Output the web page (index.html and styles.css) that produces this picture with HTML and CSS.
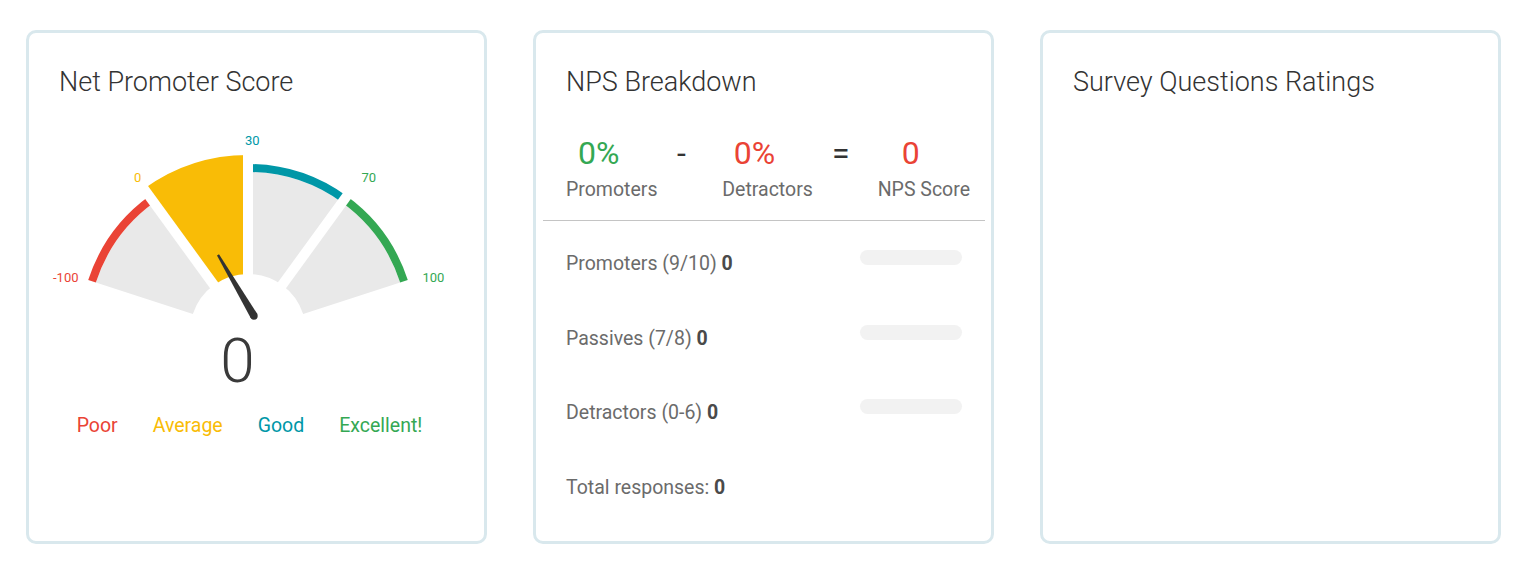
FILE: index.html
```html
<!DOCTYPE html>
<html>
<head>
<meta charset="utf-8">
<link rel="stylesheet" href="styles.css">
</head>
<body>
<div class="board">
  <section class="card">
    <h2 class="card-title">Net Promoter Score</h2>
    <svg class="gauge" width="455" height="195" viewBox="29 130 455 195">
      <path class="seg-bg" d="M 192.84 314.08 L 95.83 282.56 A 160 160 0 0 1 153.95 202.56 L 213.91 285.08 A 58 58 0 0 0 192.84 314.08 Z"/>
      <path class="c-red" d="M 95.83 282.56 L 88.22 280.08 A 168 168 0 0 1 149.25 196.09 L 153.95 202.56 A 160 160 0 0 0 95.83 282.56 Z"/>
      <path class="c-yellow" d="M 213.91 285.08 L 143.96 188.80 A 177 177 0 0 1 248 155 L 248 274 A 58 58 0 0 0 213.91 285.08 Z"/>
      <path class="seg-bg" d="M 248 274 L 248 172 A 160 160 0 0 1 342.05 202.56 L 282.09 285.08 A 58 58 0 0 0 248 274 Z"/>
      <path class="c-teal" d="M 248 172 L 248 164 A 168 168 0 0 1 346.75 196.09 L 342.05 202.56 A 160 160 0 0 0 248 172 Z"/>
      <path class="seg-bg" d="M 282.09 285.08 L 342.05 202.56 A 160 160 0 0 1 400.17 282.56 L 303.16 314.08 A 58 58 0 0 0 282.09 285.08 Z"/>
      <path class="c-green" d="M 342.05 202.56 L 346.75 196.09 A 168 168 0 0 1 407.78 280.08 L 400.17 282.56 A 160 160 0 0 0 342.05 202.56 Z"/>
      <line class="gap" x1="248" y1="332" x2="139.26" y2="182.33"/>
      <line class="gap" x1="248" y1="332" x2="248" y2="147"/>
      <line class="gap" x1="248" y1="332" x2="356.74" y2="182.33"/>
      <polygon class="needle" points="257.3,314.0 219.0,254.3 217.0,255.5 250.7,318.0"/>
      <circle class="needle" cx="254" cy="316" r="3.7"/>
      <text class="tick c-red" x="53" y="281.5">-100</text>
      <text class="tick c-yellow" x="134" y="181.5">0</text>
      <text class="tick c-teal" x="245" y="145">30</text>
      <text class="tick c-green" x="361.5" y="181.5">70</text>
      <text class="tick c-green" x="422.5" y="281.5">100</text>
    </svg>
    <div class="gauge-value">0</div>
    <div class="legend">
      <span class="t-red">Poor</span>
      <span class="t-yellow">Average</span>
      <span class="t-teal">Good</span>
      <span class="t-green">Excellent!</span>
    </div>
  </section>

  <section class="card card-nps">
    <h2 class="card-title">NPS Breakdown</h2>
    <div class="stats">
      <div class="stat">
        <div class="stat-num t-green">0%</div>
        <div class="stat-label">Promoters</div>
      </div>
      <div class="op op-minus">-</div>
      <div class="stat">
        <div class="stat-num t-red">0%</div>
        <div class="stat-label">Detractors</div>
      </div>
      <div class="op op-eq">=</div>
      <div class="stat">
        <div class="stat-num t-red">0</div>
        <div class="stat-label">NPS Score</div>
      </div>
    </div>
    <hr class="divider">
    <ul class="rows">
      <li class="row"><span class="row-label">Promoters (9/10) <b>0</b></span><span class="bar"></span></li>
      <li class="row"><span class="row-label">Passives (7/8) <b>0</b></span><span class="bar"></span></li>
      <li class="row"><span class="row-label">Detractors (0-6) <b>0</b></span><span class="bar"></span></li>
      <li class="row"><span class="row-label">Total responses: <b>0</b></span></li>
    </ul>
  </section>

  <section class="card">
    <h2 class="card-title">Survey Questions Ratings</h2>
  </section>
</div>
</body>
</html>
```

FILE: styles.css
```css
* { box-sizing: border-box; }

body {
  margin: 0;
  background: #ffffff;
  font-family: Roboto, "Liberation Sans", Arial, sans-serif;
  color: #333333;
}

.board {
  display: flex;
  gap: 46px;
  padding: 30px 0 0 26px;
}

.card {
  width: 461px;
  height: 514px;
  border: 3px solid #d9e8ed;
  border-radius: 10px;
  padding: 34px 30px 0 30px;
  background: #fff;
}

.card-title {
  margin: 0;
  font-size: 27px;
  line-height: 30px;
  font-weight: 300;
  color: #333;
}

/* gauge */
.gauge {
  display: block;
  margin: 33px 0 0 -30px;
}

.seg-bg { fill: #e9e9e9; }
.c-red { fill: #ea4335; }
.c-yellow { fill: #f9bc06; }
.c-teal { fill: #0097a7; }
.c-green { fill: #34a853; }
.gap { stroke: #ffffff; stroke-width: 10; }
.needle { fill: #333333; }
.tick {
  font-family: Roboto, "Liberation Sans", sans-serif;
  font-size: 13px;
}

.gauge-value {
  margin-top: 5px;
  font-size: 62px;
  line-height: 62px;
  font-weight: 300;
  color: #3a3a3a;
  text-align: center;
  padding-right: 38px;
}

.legend {
  margin-top: 23px;
  display: flex;
  justify-content: center;
  gap: 35px;
  padding-right: 14px;
  font-size: 19.5px;
  line-height: 22px;
}

.t-red { color: #ea4335; }
.t-yellow { color: #f9bc06; }
.t-teal { color: #0097a7; }
.t-green { color: #34a853; }

/* NPS breakdown */
.card-nps { padding-right: 29px; }

.stats {
  margin: 38px -8px 0 0;
  display: grid;
  grid-template-columns: auto 1fr auto 1fr auto;
}

.stat {
  display: flex;
  flex-direction: column;
  align-items: center;
}

.stat-num {
  font-size: 32px;
  line-height: 36px;
  padding-right: 26px;
}

.stat-label {
  margin-top: 8px;
  font-size: 19.5px;
  line-height: 22px;
  color: #6b6b6b;
}

.op {
  font-size: 32px;
  line-height: 36px;
  color: #333;
  text-align: center;
}
.op-minus { padding-right: 17px; }
.op-eq { padding-right: 9px; }

.divider {
  margin: 19px -23px 0 -23px;
  border: 0;
  border-top: 1px solid #c4c4c4;
}

.rows {
  list-style: none;
  margin: 32px 0 0 0;
  padding: 0;
  display: flex;
  flex-direction: column;
  gap: 52.7px;
}

.row {
  display: flex;
  align-items: flex-start;
  font-size: 19.5px;
  line-height: 22px;
  color: #6b6b6b;
}

.row-label { flex: 1; }
.row-label b { color: #4a4a4a; font-weight: 700; }

.bar {
  width: 102px;
  height: 15px;
  margin-top: -3px;
  border-radius: 8px;
  background: #f2f2f2;
}
```
